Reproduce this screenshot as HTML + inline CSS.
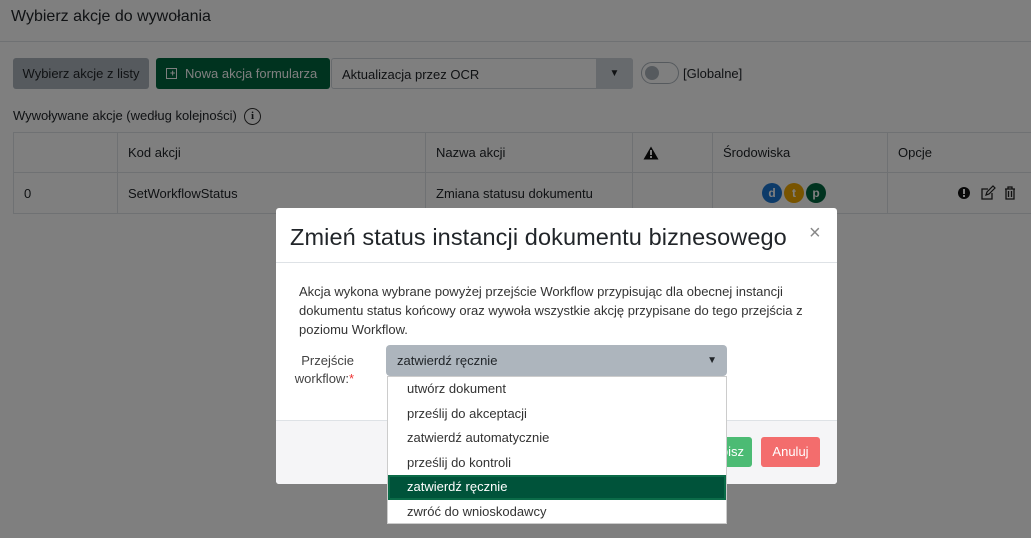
<!DOCTYPE html>
<html><head><meta charset="utf-8"><style>
*{box-sizing:border-box;margin:0;padding:0}
body{width:1031px;height:538px;overflow:hidden;background:#fff;font-family:"Liberation Sans","DejaVu Sans",sans-serif;color:#212529;position:relative}
.abs{position:absolute}
.t{font-size:13px}
td,th{border:1px solid #dee2e6;font-weight:normal;text-align:left;font-size:13px;padding:0 0 0 10px}
.ov{position:absolute;left:0;top:0;width:1031px;height:538px;background:rgba(0,0,0,.5)}
.dot{display:inline-block;width:20px;height:20px;border-radius:50%;color:#fff;font-weight:bold;font-size:12px;text-align:center;line-height:20px;margin:0 1px}
</style></head><body>
<div class="abs" style="left:11px;top:8px;font-size:16px">Wybierz akcje do wywołania</div>
<div class="abs" style="left:0;top:41px;width:1031px;border-top:1px solid #dee2e6"></div>
<div class="abs t" style="left:13px;top:58px;width:136px;height:31px;background:#adb5bd;border-radius:3px;line-height:31px;text-align:center">Wybierz akcje z listy</div>
<div class="abs t" style="left:156px;top:58px;width:174px;height:31px;background:#00663f;border-radius:3px;line-height:31px;color:#fff;padding-left:10px"><span style="display:inline-block;width:11px;height:11px;border:1.5px solid #fff;vertical-align:-1px;margin-right:8px;position:relative"><span style="position:absolute;left:3px;top:1px;font-size:9px;line-height:7px;font-weight:bold">+</span></span>Nowa akcja formularza</div>
<div class="abs t" style="left:331px;top:58px;width:302px;height:31px;border:1px solid #ced4da;border-radius:3px;line-height:31px;padding-left:10px;color:#212529">Aktualizacja przez OCR</div>
<div class="abs" style="left:596px;top:58px;width:37px;height:31px;background:#ced4da;border-radius:0 3px 3px 0;text-align:center;line-height:31px;font-size:10px">▼</div>
<div class="abs" style="left:641px;top:62px;width:38px;height:22px;border:1px solid #adb5bd;border-radius:11px"><div style="position:absolute;left:3px;top:3px;width:14px;height:14px;border-radius:50%;background:#adb5bd"></div></div>
<div class="abs t" style="left:683px;top:66px">[Globalne]</div>
<div class="abs t" style="left:13px;top:108px">Wywoływane akcje (według kolejności)</div>
<div class="abs" style="left:244px;top:108px;width:17px;height:17px;border:1.5px solid #333;border-radius:50%;font-size:11px;text-align:center;line-height:14px;font-weight:bold;font-family:'Liberation Serif',serif">i</div>
<table class="abs" style="left:13px;top:132px;width:1030px;border-collapse:collapse">
<tr style="height:40px"><th style="width:104px"></th><th style="width:308px">Kod akcji</th><th style="width:207px">Nazwa akcji</th><th style="width:80px"><svg width="16" height="14" viewBox="0 0 16 14" style="vertical-align:middle"><path d="M8 0.5L15.5 13.5H0.5Z" fill="#111"/><rect x="7" y="4" width="2" height="5" fill="#fff"/><rect x="7" y="10" width="2" height="2" fill="#fff"/></svg></th><th style="width:175px">Środowiska</th><th>Opcje</th></tr>
<tr style="height:41px"><td>0</td><td>SetWorkflowStatus</td><td>Zmiana statusu dokumentu</td><td></td><td style="text-align:center;padding:0 12px 0 0"><span class="dot" style="background:#1b76d2">d</span><span class="dot" style="background:#f0a800">t</span><span class="dot" style="background:#00663f">p</span></td><td style="text-align:right;padding-right:20px">
<svg width="70" height="16" viewBox="0 0 70 16" style="vertical-align:middle"><circle cx="12" cy="8" r="6" fill="#111"/><rect x="11" y="4" width="2" height="5" fill="#fff"/><rect x="11" y="10" width="2" height="2" fill="#fff"/>
<path d="M36 4H30V14H40V8" fill="none" stroke="#222" stroke-width="1.3"/><path d="M34 10L35 7L41 1L43 3L37 9Z" fill="none" stroke="#222" stroke-width="1.2"/>
<path d="M53 4H63M56 4V2H60V4M54 4V14H62V4M56.5 6V12M59.5 6V12" fill="none" stroke="#222" stroke-width="1.3"/></svg></td></tr>
</table>
<div class="ov"></div>
<div class="abs" style="left:276px;top:208px;width:561px;height:276px;background:#fff;border-radius:3px;overflow:hidden">
<div style="position:absolute;left:14px;top:16px;font-size:23.5px;letter-spacing:0.1px">Zmień status instancji dokumentu biznesowego</div>
<div style="position:absolute;left:533px;top:14px;font-size:20px;color:#888">×</div>
<div style="position:absolute;left:0;top:54px;width:561px;border-top:1px solid #dee2e6"></div>
<div style="position:absolute;left:23px;top:74px;width:520px;font-size:13px;line-height:19px;color:#333">Akcja wykona wybrane powyżej przejście Workflow przypisując dla obecnej instancji dokumentu status końcowy oraz wywoła wszystkie akcję przypisane do tego przejścia z poziomu Workflow.</div>
<div style="position:absolute;left:14px;top:144px;width:64px;text-align:right;font-size:13px;line-height:18px;color:#444">Przejście workflow:<span style="color:#e33">*</span></div>
<div style="position:absolute;left:110px;top:137px;width:341px;height:31px;background:#adb5bd;border-radius:4px;font-size:13px;line-height:31px;padding-left:11px">zatwierdź ręcznie<span style="position:absolute;right:10px;font-size:10px">▼</span></div>
<div style="position:absolute;left:0;top:212px;width:561px;height:64px;background:#f5f5f7;border-top:1px solid #dee2e6"></div>
<div style="position:absolute;left:420px;top:229px;width:56px;height:30px;background:#4cbb74;border-radius:3px;color:#fff;font-size:13px;line-height:30px;text-align:right;padding-right:8px">Zapisz</div>
<div style="position:absolute;left:485px;top:229px;width:59px;height:30px;background:#f36d6d;border-radius:3px;color:#fff;font-size:13px;line-height:30px;text-align:center">Anuluj</div>
</div>
<div class="abs" style="left:387px;top:376px;width:340px;height:148px;background:#fff;border:1px solid #ccc;font-size:13px;color:#333">
<div style="height:24.5px;line-height:24px;padding-left:19px">utwórz dokument</div>
<div style="height:24.5px;line-height:24px;padding-left:19px">prześlij do akceptacji</div>
<div style="height:24.5px;line-height:24px;padding-left:19px">zatwierdź automatycznie</div>
<div style="height:24.5px;line-height:24px;padding-left:19px">prześlij do kontroli</div>
<div style="height:24.5px;line-height:24px;padding-left:19px;background:#00533a;color:#fff;box-shadow:inset 0 0 0 2px #0b6b48">zatwierdź ręcznie</div>
<div style="height:24.5px;line-height:24px;padding-left:19px">zwróć do wnioskodawcy</div>
</div>
</body></html>
